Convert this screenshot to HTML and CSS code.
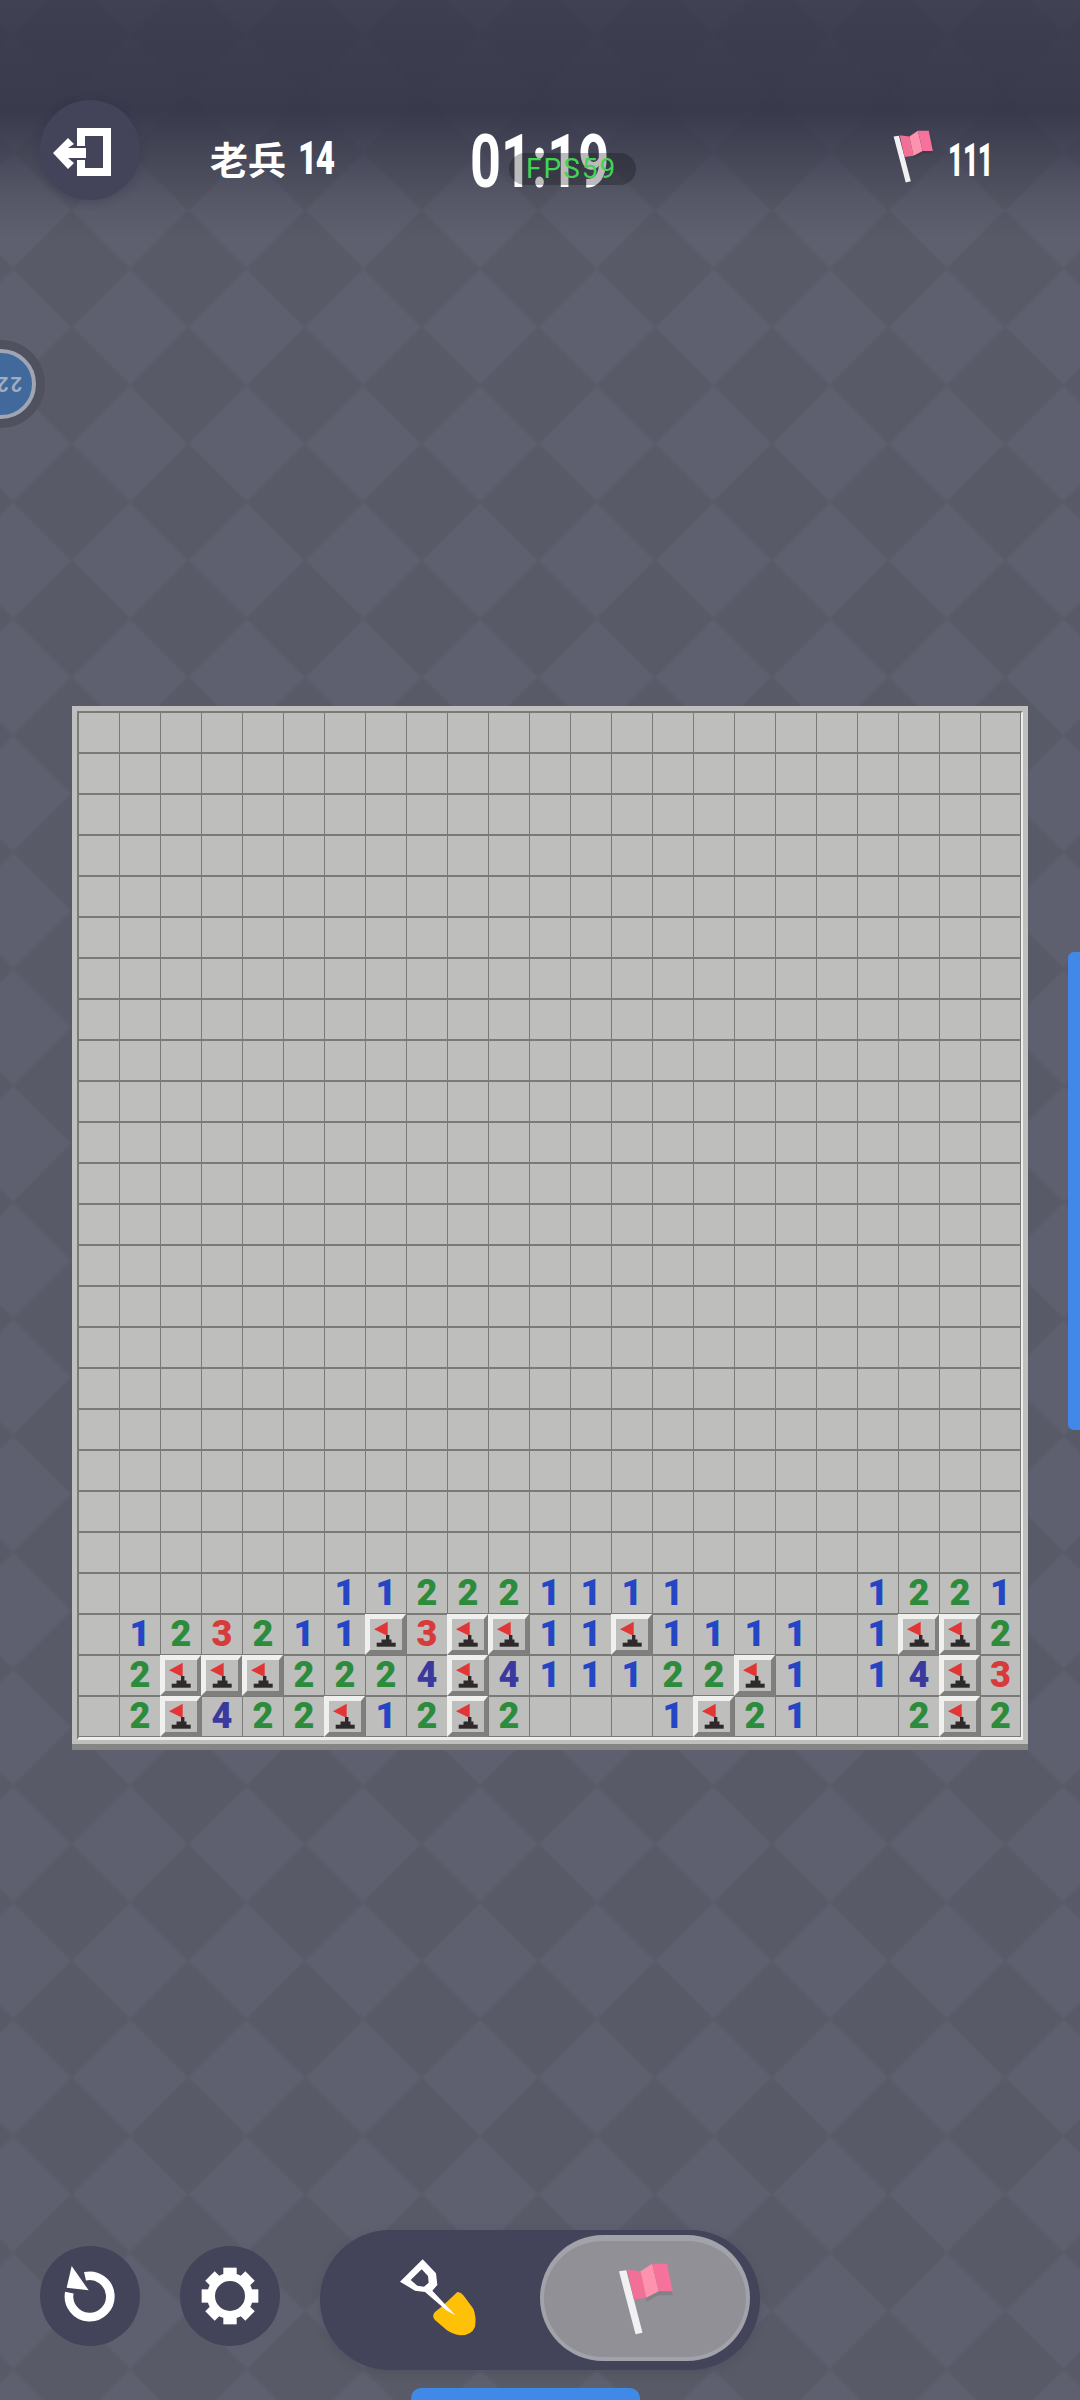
FILE: index.html
```html
<!DOCTYPE html>
<html lang="zh">
<head>
<meta charset="utf-8">
<title>扫雷</title>
<link rel="stylesheet" href="styles.css">
</head>
<body>
<svg class="defs" width="0" height="0" aria-hidden="true">
  <symbol id="cflag" viewBox="0 0 32 31">
    <polygon points="4,10.3 17.7,2.7 17.7,17" fill="#e23636"/>
    <rect x="16" y="16" width="3.4" height="8" fill="#2e2a2c"/>
    <rect x="11.5" y="20.5" width="10" height="3.5" fill="#2e2a2c"/>
    <rect x="6.7" y="23.7" width="19" height="4" fill="#2e2a2c"/>
  </symbol>
  <symbol id="pink" viewBox="100 90 190 230">
    <polygon points="140,127 182,132 197,212 235,192 277,192 262,109 217,109 180,132" fill="#000" opacity=".1"/>
    <polygon points="115,120 137,117 186,305 165,310" fill="#f1f0f3"/>
    <polygon points="140,115 180,120 197,200 160,205" fill="#f26f98"/>
    <polygon points="180,120 215,97 235,180 197,200" fill="#ff92ae"/>
    <polygon points="215,97 260,97 277,180 235,180" fill="#f4729b"/>
  </symbol>
</svg>

<main class="screen">
  <svg class="backdrop" width="1080" height="2400" aria-hidden="true">
    <defs>
      <pattern id="tile" width="116.7" height="116.7" patternUnits="userSpaceOnUse" patternTransform="translate(71.55 35.25)">
        <rect width="116.7" height="116.7" fill="#5a5c6a"/>
        <polygon points="58.35,3 113.7,58.35 58.35,113.7 3,58.35" fill="#5e606f" stroke="#5e606f" stroke-width="2" stroke-linejoin="round"/>
        <polygon points="0,-55.3 55.3,0 0,55.3 -55.3,0" fill="#585a67" stroke="#585a67" stroke-width="2" stroke-linejoin="round"/>
        <polygon points="116.7,-55.3 172,0 116.7,55.3 61.4,0" fill="#585a67" stroke="#585a67" stroke-width="2" stroke-linejoin="round"/>
        <polygon points="0,61.4 55.3,116.7 0,172 -55.3,116.7" fill="#585a67" stroke="#585a67" stroke-width="2" stroke-linejoin="round"/>
        <polygon points="116.7,61.4 172,116.7 116.7,172 61.4,116.7" fill="#585a67" stroke="#585a67" stroke-width="2" stroke-linejoin="round"/>
      </pattern>
    </defs>
    <rect width="1080" height="2400" fill="url(#tile)"/>
  </svg>
  <div class="top-shade"></div>

  <header class="hud">
    <button class="round exit" aria-label="退出">
      <svg viewBox="40 100 100 100" width="100" height="100">
        <path fill="#fff" d="M77 128H111V176H77V160H85V168H103V136H85V146H77Z"/>
        <path fill="#fff" d="M53 153 68 138 74 144 68 148H86V158H68L74 163 68 169Z"/>
      </svg>
    </button>
    <div class="rank"><span class="rank-name">老兵</span><span class="rank-level">14</span></div>
    <div class="timer"><span class="timer-text">01:19</span></div>
    <div class="flags">
      <svg class="flags-icon"><use href="#pink"/></svg>
      <span class="flags-count">111</span>
    </div>
  </header>

  <section class="board">
    <div class="board-inner">
      <div class="grid">
        <div class="blank-rows"></div>

        <div class="cell"></div><div class="cell"></div><div class="cell"></div><div class="cell"></div><div class="cell"></div><div class="cell"></div>
        <div class="cell n1">1</div><div class="cell n1">1</div><div class="cell n2">2</div><div class="cell n2">2</div><div class="cell n2">2</div><div class="cell n1">1</div><div class="cell n1">1</div><div class="cell n1">1</div><div class="cell n1">1</div>
        <div class="cell"></div><div class="cell"></div><div class="cell"></div><div class="cell"></div>
        <div class="cell n1">1</div><div class="cell n2">2</div><div class="cell n2">2</div><div class="cell n1">1</div>

        <div class="cell"></div><div class="cell n1">1</div><div class="cell n2">2</div><div class="cell n3">3</div><div class="cell n2">2</div><div class="cell n1">1</div><div class="cell n1">1</div>
        <div class="cell up"><svg class="cf"><use href="#cflag"/></svg></div>
        <div class="cell n3">3</div>
        <div class="cell up"><svg class="cf"><use href="#cflag"/></svg></div>
        <div class="cell up"><svg class="cf"><use href="#cflag"/></svg></div>
        <div class="cell n1">1</div><div class="cell n1">1</div>
        <div class="cell up"><svg class="cf"><use href="#cflag"/></svg></div>
        <div class="cell n1">1</div><div class="cell n1">1</div><div class="cell n1">1</div><div class="cell n1">1</div><div class="cell"></div><div class="cell n1">1</div>
        <div class="cell up"><svg class="cf"><use href="#cflag"/></svg></div>
        <div class="cell up"><svg class="cf"><use href="#cflag"/></svg></div>
        <div class="cell n2">2</div>

        <div class="cell"></div><div class="cell n2">2</div>
        <div class="cell up"><svg class="cf"><use href="#cflag"/></svg></div>
        <div class="cell up"><svg class="cf"><use href="#cflag"/></svg></div>
        <div class="cell up"><svg class="cf"><use href="#cflag"/></svg></div>
        <div class="cell n2">2</div><div class="cell n2">2</div><div class="cell n2">2</div><div class="cell n4">4</div>
        <div class="cell up"><svg class="cf"><use href="#cflag"/></svg></div>
        <div class="cell n4">4</div><div class="cell n1">1</div><div class="cell n1">1</div><div class="cell n1">1</div><div class="cell n2">2</div><div class="cell n2">2</div>
        <div class="cell up"><svg class="cf"><use href="#cflag"/></svg></div>
        <div class="cell n1">1</div><div class="cell"></div><div class="cell n1">1</div><div class="cell n4">4</div>
        <div class="cell up"><svg class="cf"><use href="#cflag"/></svg></div>
        <div class="cell n3">3</div>

        <div class="cell"></div><div class="cell n2">2</div>
        <div class="cell up"><svg class="cf"><use href="#cflag"/></svg></div>
        <div class="cell n4">4</div><div class="cell n2">2</div><div class="cell n2">2</div>
        <div class="cell up"><svg class="cf"><use href="#cflag"/></svg></div>
        <div class="cell n1">1</div><div class="cell n2">2</div>
        <div class="cell up"><svg class="cf"><use href="#cflag"/></svg></div>
        <div class="cell n2">2</div><div class="cell"></div><div class="cell"></div><div class="cell"></div><div class="cell n1">1</div>
        <div class="cell up"><svg class="cf"><use href="#cflag"/></svg></div>
        <div class="cell n2">2</div><div class="cell n1">1</div><div class="cell"></div><div class="cell"></div><div class="cell n2">2</div>
        <div class="cell up"><svg class="cf"><use href="#cflag"/></svg></div>
        <div class="cell n2">2</div>
      </div>
    </div>
  </section>

  <footer class="controls">
    <button class="round tool" aria-label="重来">
      <svg viewBox="30 30 300 300" width="100" height="100">
        <path d="M165 121A62 62 0 1 1 118 170" fill="none" stroke="#fff" stroke-width="26"/>
        <polygon points="125,90 176,163 110,155" fill="#fff"/>
      </svg>
    </button>
    <button class="round tool" aria-label="设置">
      <svg viewBox="450 30 300 300" width="100" height="100">
        <circle cx="600" cy="180" r="57" fill="none" stroke="#fff" stroke-width="24"/>
        <g fill="#fff">
          <rect x="580" y="95" width="40" height="30"/>
          <rect x="580" y="95" width="40" height="30" transform="rotate(45 600 180)"/>
          <rect x="580" y="95" width="40" height="30" transform="rotate(90 600 180)"/>
          <rect x="580" y="95" width="40" height="30" transform="rotate(135 600 180)"/>
          <rect x="580" y="95" width="40" height="30" transform="rotate(180 600 180)"/>
          <rect x="580" y="95" width="40" height="30" transform="rotate(225 600 180)"/>
          <rect x="580" y="95" width="40" height="30" transform="rotate(270 600 180)"/>
          <rect x="580" y="95" width="40" height="30" transform="rotate(315 600 180)"/>
        </g>
      </svg>
    </button>
    <div class="mode">
      <div class="mode-dig">
        <svg viewBox="60 0 660 420" width="220" height="140">
          <path d="M472 186Q482 186 490 196L520 236Q530 262 525 290Q515 316 480 316Q456 312 440 300L405 270Q394 258 405 246L430 226Z" fill="#ffc107"/>
          <path fill="#fff" fill-rule="evenodd" d="M368 88 408 130 412 165 397 182 466 256 438 240 375 186 345 182 300 155ZM365 118 332 150 352 167 372 170 386 158 384 138Z"/>
        </svg>
      </div>
      <div class="mode-flag">
        <svg class="mode-flag-icon"><use href="#pink"/></svg>
      </div>
    </div>
  </footer>

  <div class="fps">FPS59</div>
  <div class="float-badge"><div class="float-ring"><span class="float-num">22</span></div></div>
  <div class="scroll-v"></div>
  <div class="scroll-h"></div>
</main>
</body>
</html>
```
FILE: styles.css
```css
* { box-sizing: border-box; }
html, body { margin: 0; padding: 0; }
body { background: #5b5d6b; font-family: "Roboto", "Noto Sans CJK SC", sans-serif; }
.defs { position: absolute; }
.screen { position: relative; width: 1080px; height: 2400px; overflow: hidden; }
.backdrop { position: absolute; left: 0; top: 0; }
.top-shade {
  position: absolute; left: 0; top: 0; width: 100%; height: 260px;
  background: linear-gradient(180deg, rgba(50,51,70,.68) 0, rgba(50,51,70,.85) 110px, rgba(50,51,70,.55) 150px, rgba(50,51,70,.18) 200px, rgba(50,51,70,0) 240px);
}

.hud, .board, .controls { position: relative; }
.round { width: 100px; height: 100px; padding: 0; border: 0; border-radius: 50%; background: #43445a; display: block; flex: none; }
.round svg { display: block; }

.hud { display: flex; height: 100px; margin-top: 0; padding: 0 0 0 40px; top: 100px; color: #fff; }
.exit { box-shadow: 0 2px 8px rgba(50,50,70,.35); }
.rank { margin: 28px 0 0 70px; width: 261px; display: flex; align-items: center; height: 60px; }
.rank-name { font: 700 38px/60px "Noto Sans CJK SC", sans-serif; width: 88px; }
.rank-level { font: 900 46px/60px "Roboto", sans-serif; display: inline-block; width: 37px; transform: scaleX(.72); transform-origin: left center; letter-spacing: -2px; }
.timer { width: 138px; height: 60px; margin-top: 31px; display: flex; justify-content: center; }
.timer-text { font: 700 75px/60px "Roboto", sans-serif; transform: scaleX(.72); display: block; white-space: nowrap; }
.flags { margin-left: 281px; display: flex; }
.flags-icon { width: 46px; height: 56px; margin-top: 29px; }
.flags-count { font: 900 46px/60px "Roboto", sans-serif; margin: 30px 0 0 12px; display: block; width: 41px; transform: scaleX(.58); transform-origin: left center; letter-spacing: -1px; }

.board { width: 956px; margin: 506px 0 0 72px; background: #bfbfbd; padding: 5px 5px 4px; border-bottom: 6px solid #858583; top: 100px; }
.board-inner { border-top: 2px solid #7a7a78; border-left: 2px solid #7a7a78; border-right: 2px solid #eeeeec; border-bottom: 3px solid #eeeeec; }
.grid {
  display: grid;
  grid-template-columns: repeat(22, 40px) 39px;
  grid-template-rows: repeat(25, 39px);
  column-gap: 1px; row-gap: 2px;
  padding: 0 1px 1px 0;
  background: #7a7a78;
}
.blank-rows {
  grid-column: 1 / -1; grid-row: span 21;
  background:
    repeating-linear-gradient(180deg, transparent 0 39px, #7a7a78 39px 41px),
    repeating-linear-gradient(90deg, #bebebc 0 40px, #7a7a78 40px 41px);
}
.cell {
  background: #bebebc; text-align: center;
  font: 900 36px/39px "Roboto", sans-serif;
  display: flex; align-items: center; justify-content: center;
}
.n1 { color: #2446c4; }
.n2 { color: #2c8c3c; }
.n3 { color: #d63a3a; }
.n4 { color: #3a3a9e; }
.up {
  margin: -1px 0 -1px -1px;
  border-style: solid; border-width: 5px 4px 5px 5px;
  border-color: #f0f0ee #7f7f7d #7f7f7d #f0f0ee;
  display: block;
}
.cf { display: block; width: 32px; height: 31px; }

.controls { display: flex; gap: 40px; padding-left: 40px; margin-top: 480px; top: 100px; align-items: flex-start; }
.tool { margin-top: 16px; }
.mode { width: 440px; height: 140px; border-radius: 70px; background: #43445a; display: flex; padding: 5px 10px 9px 0; box-shadow: 0 3px 10px rgba(50,50,70,.2); }
.mode-dig { width: 220px; height: 140px; margin-top: -5px; flex: none; }
.mode-dig svg { display: block; }
.mode-flag { flex: 1; border-radius: 63px; background: #909096; border: 4px solid #a2a2aa; border-top-width: 6px; display: flex; align-items: center; justify-content: center; }
.mode-flag-icon { width: 63px; height: 77px; }

.fps { position: absolute; left: 509px; top: 153px; width: 127px; height: 32px; border-radius: 16px; background: rgba(12,12,14,.28); color: #42d454; font: 400 28px/32px "Roboto", sans-serif; letter-spacing: 2px; padding-left: 17px; white-space: nowrap; }
.float-badge { position: absolute; left: -43px; top: 340px; width: 88px; height: 88px; border-radius: 50%; background: #50515f; display: flex; align-items: center; justify-content: center; }
.float-ring { width: 70px; height: 70px; border-radius: 50%; background: #41699b; border: 4px solid #a0a5b3; display: flex; align-items: center; justify-content: flex-end; }
.float-num { display: block; color: #a0adc0; font: 700 20px/20px "Roboto", sans-serif; letter-spacing: 2px; transform: rotate(180deg); margin-right: 10px; }
.scroll-v { position: absolute; right: 0; top: 952px; width: 12px; height: 478px; background: #4288e8; border-radius: 6px 0 0 6px; }
.scroll-h { position: absolute; left: 411px; bottom: 0; width: 229px; height: 12px; background: #4189e6; border-radius: 10px 10px 0 0; }
```
